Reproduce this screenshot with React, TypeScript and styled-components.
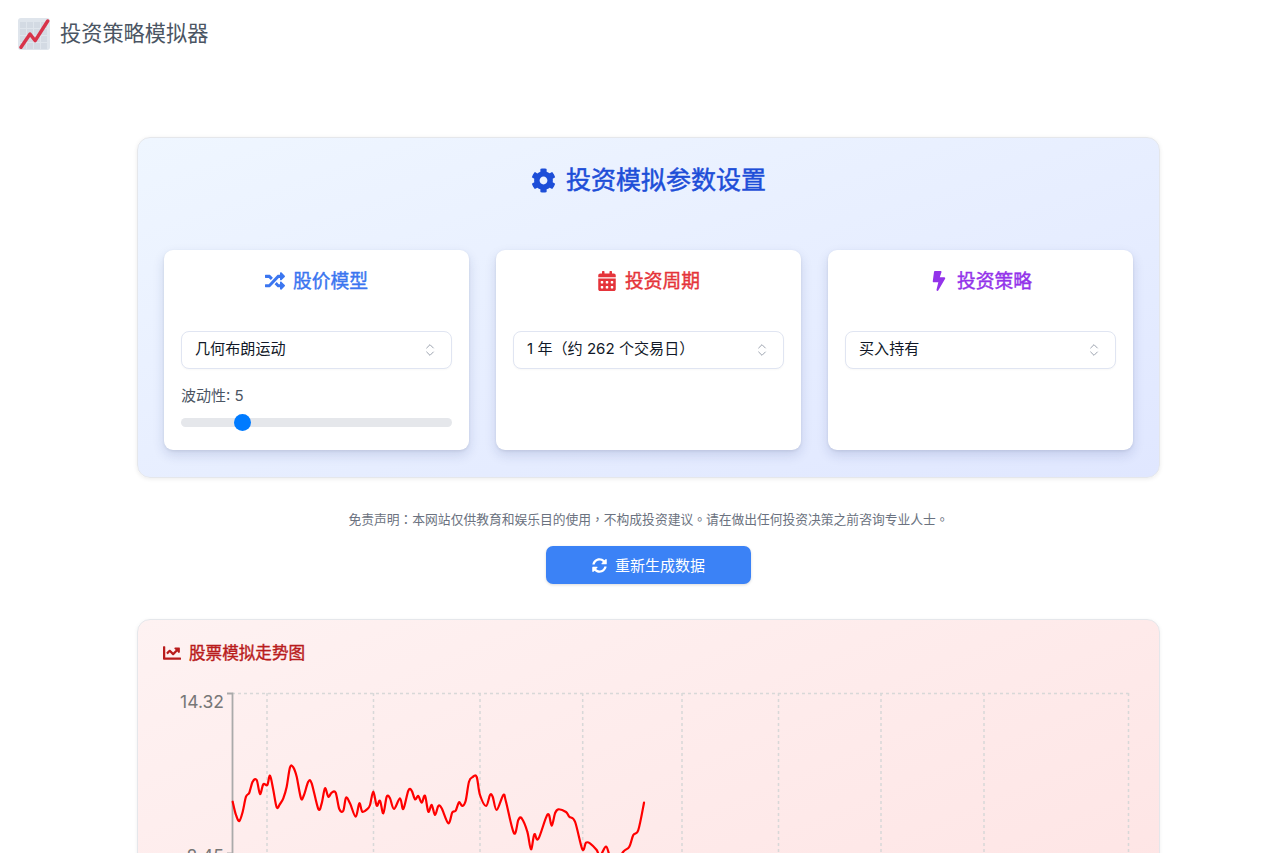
import React from "react";
import styled, { createGlobalStyle } from "styled-components";
import { FaCog, FaRandom, FaCalendarAlt, FaBolt, FaSyncAlt, FaChartLine } from "react-icons/fa";
import { ChevronsUpDown } from "lucide-react";

const Global = createGlobalStyle`
  html, body { margin: 0; height: 853px; overflow: hidden; background: #fff; }
  body { font-family: Inter, "Noto Sans CJK SC", sans-serif; color: #111827; }
  * { box-sizing: border-box; }
`;

const Header = styled.header`
  display: flex;
  align-items: center;
  gap: 10px;
  height: 68px;
  padding: 0 18px;
`;
const BrandName = styled.span`
  padding-bottom: 2px;
  font-size: 21.2px;
  line-height: 32px;
  color: #4b5563;
`;
const Main = styled.main`
  width: 1023px;
  margin: 69px 0 0 137px;
  display: flex;
  flex-direction: column;
  align-items: center;
`;
const SettingsPanel = styled.section`
  width: 100%;
  padding: 26px 26px 27px;
  border: 1px solid #e5e7eb;
  border-radius: 13px;
  background: linear-gradient(to bottom right, #eff6ff, #e0e7ff);
  box-shadow: 0 1px 4px rgba(0, 0, 0, 0.08);
`;
const PanelTitle = styled.h2`
  display: flex;
  justify-content: center;
  align-items: center;
  gap: 10px;
  margin: 0 0 54px;
  height: 32px;
  font-size: 25px;
  font-weight: 400;
  -webkit-text-stroke: 0.5px currentColor;
  color: #1d4ed8;
`;
const TitleText = styled.span<{ $lift: number }>`
  padding-bottom: ${(p) => p.$lift}px;
`;
const CardGrid = styled.div`
  display: grid;
  grid-template-columns: repeat(3, 1fr);
  gap: 27px;
`;
const Card = styled.div`
  display: flex;
  flex-direction: column;
  padding: 17px 17px 23px;
  border-radius: 9px;
  background: #fff;
  box-shadow: 0 5px 12px rgba(30, 50, 120, 0.15), 0 1px 3px rgba(0, 0, 0, 0.08);
`;
const CardTitle = styled.h3<{ $tone: string }>`
  display: flex;
  justify-content: center;
  align-items: center;
  gap: 8px;
  height: 28px;
  margin: 0 0 36px;
  font-size: 18.75px;
  font-weight: 400;
  -webkit-text-stroke: 0.4px currentColor;
  color: ${(p) => p.$tone};
`;
const SelectWrap = styled.div`
  position: relative;
  height: 38px;
  color: #9ca3af;
`;
const NativeSelect = styled.select`
  appearance: none;
  display: block;
  width: 100%;
  height: 100%;
  padding: 0 13px 3px;
  border: 1px solid #e0e5f2;
  border-radius: 8px;
  background: #fff;
  font: 400 15.1px Inter, "Noto Sans CJK SC", sans-serif;
  color: #111827;
  box-shadow: 0 1px 2px rgba(0, 0, 0, 0.03);
`;
const SelectIcon = styled(ChevronsUpDown)`
  position: absolute;
  top: 11px;
  right: 14px;
  pointer-events: none;
`;
const SliderLabel = styled.label`
  margin-top: 17px;
  font-size: 15px;
  line-height: 20px;
  color: #4b5563;
`;
const Slider = styled.input`
  appearance: none;
  display: block;
  width: 100%;
  height: 9px;
  margin: 12px 0 0;
  border-radius: 5px;
  background: #e5e7eb;
  &::-webkit-slider-thumb {
    appearance: none;
    width: 17px;
    height: 17px;
    border-radius: 50%;
    background: #007bff;
  }
`;
const Disclaimer = styled.p`
  margin: 32px 0 0;
  font-family: Inter, "Noto Sans CJK TC", sans-serif;
  font-size: 12.77px;
  line-height: 20px;
  color: #6b7280;
  white-space: nowrap;
`;
const Regenerate = styled.button`
  display: flex;
  align-items: center;
  justify-content: center;
  gap: 8px;
  width: 205px;
  height: 38px;
  margin-top: 16px;
  border: 0;
  border-radius: 7px;
  background: #3b82f6;
  color: #fff;
  font: 400 15px Inter, "Noto Sans CJK SC", sans-serif;
  box-shadow: 0 1px 3px rgba(0, 0, 0, 0.15);
`;
const ChartPanel = styled.section`
  width: 100%;
  height: 420px;
  margin-top: 35px;
  padding: 19px 25px;
  border: 1px solid #e5e7eb;
  border-radius: 13px;
  background: linear-gradient(to bottom right, #fef2f2, #fee2e2);
  box-shadow: 0 1px 4px rgba(0, 0, 0, 0.06);
`;
const ChartTitle = styled.h3`
  display: flex;
  align-items: center;
  gap: 8px;
  height: 28px;
  margin: 0 0 13px;
  font-size: 16.6px;
  font-weight: 400;
  -webkit-text-stroke: 0.4px currentColor;
  color: #b91c1c;
`;
const ChartSvg = styled.svg`
  display: block;
`;
const AxisLabel = styled.text`
  font: 400 17.5px Inter, sans-serif;
  fill: #777;
  text-anchor: end;
`;

// Line points read from the reference, converted to page coordinates.
const rawA = [[308,575],[318,615],[328,633],[338,605],[348,560],[358,548],[368,515],[380,510],[390,552],[400,523],[412,525],[420,497],[430,540],[440,592],[450,582],[460,565],[470,530],[480,472],[490,472],[500,500],[513,565],[522,555],[535,515],[545,520],[565,597],[575,580],[585,535],[595,560],[605,548],[617,548],[628,597],[640,602],[648,563],[660,580],[677,620],[688,580],[697,605],[712,597],[720,585],[730,545],[740,587],[750,572],[760,610],[770,560],[780,565],[792,597],[810,565],[820,597],[835,542],[845,542],[855,568],[865,558],[875,578],[885,557],[895,605]];
const rawB = [[35,375],[45,405],[55,378],[65,385],[85,430],[97,397],[107,392],[117,367],[127,378],[137,362],[147,305],[158,291],[170,291],[180,345],[198,378],[210,345],[218,350],[230,390],[250,345],[258,365],[282,460],[295,420],[305,415],[322,455],[333,508],[343,463],[355,477],[383,403],[395,437],[405,400],[415,388],[438,396],[448,410],[465,425],[487,508],[498,488],[510,490],[530,510],[540,528],[558,500],[570,528],[590,545],[610,515],[628,500],[640,465],[655,450],[672,368]];
const pts = [
  ...rawA.map(([x, y]) => [130 + x / 3, 610 + y / 3]),
  ...rawB.map(([x, y]) => [420 + x / 3, 680 + y / 3]),
];
// Catmull-Rom smoothing so the line has the reference's rounded look.
const linePath = pts.reduce((d, p, i) => {
  if (i === 0) return `M${p[0].toFixed(1)} ${p[1].toFixed(1)}`;
  const p0 = pts[Math.max(i - 2, 0)];
  const p1 = pts[i - 1];
  const p3 = pts[Math.min(i + 1, pts.length - 1)];
  const c1 = [p1[0] + (p[0] - p0[0]) / 6, p1[1] + (p[1] - p0[1]) / 6];
  const c2 = [p[0] - (p3[0] - p1[0]) / 6, p[1] - (p3[1] - p1[1]) / 6];
  return `${d}C${c1[0].toFixed(1)} ${c1[1].toFixed(1)} ${c2[0].toFixed(1)} ${c2[1].toFixed(1)} ${p[0].toFixed(1)} ${p[1].toFixed(1)}`;
}, "");
const gridX = [267, 373.5, 480, 582.7, 682, 778.5, 881, 984, 1128.5];

const Logo = () => (
  <svg width="32" height="32" viewBox="0 0 32 32" aria-hidden="true">
    <rect width="32" height="32" rx="3" fill="#dfe5ec" />
    {[4, 11, 18, 25].flatMap((y) =>
      [2, 9, 16, 23].map((x) => <rect key={`${x}-${y}`} x={x} y={y} width="6" height="6" fill="#d3dae3" />)
    )}
    <path d="M3 29.3 12 16l5.2 6.7L29.7 3" fill="none" stroke="#d8334a" strokeWidth="3.4" strokeLinecap="round" strokeLinejoin="round" />
  </svg>
);

const SelectBox = ({ options }: { options: string[] }) => (
  <SelectWrap>
    <NativeSelect defaultValue={options[0]}>
      {options.map((o) => (
        <option key={o}>{o}</option>
      ))}
    </NativeSelect>
    <SelectIcon size={16} strokeWidth={1.5} />
  </SelectWrap>
);

export default function App() {
  return (
    <>
      <Global />
      <Header>
        <Logo />
        <BrandName>投资策略模拟器</BrandName>
      </Header>
      <Main>
        <SettingsPanel>
          <PanelTitle>
            <FaCog size={25} />
            <TitleText $lift={4}>投资模拟参数设置</TitleText>
          </PanelTitle>
          <CardGrid>
            <Card>
              <CardTitle $tone="#3b76f0">
                <FaRandom size={20} />
                <TitleText $lift={3}>股价模型</TitleText>
              </CardTitle>
              <SelectBox options={["几何布朗运动"]} />
              <SliderLabel htmlFor="vol">波动性: 5</SliderLabel>
              <Slider id="vol" type="range" min={1} max={20} defaultValue={5} />
            </Card>
            <Card>
              <CardTitle $tone="#e5343a">
                <FaCalendarAlt size={20} />
                <TitleText $lift={3}>投资周期</TitleText>
              </CardTitle>
              <SelectBox options={["1 年（约 262 个交易日）"]} />
            </Card>
            <Card>
              <CardTitle $tone="#9333ea">
                <FaBolt size={20} />
                <TitleText $lift={3}>投资策略</TitleText>
              </CardTitle>
              <SelectBox options={["买入持有"]} />
            </Card>
          </CardGrid>
        </SettingsPanel>
        <Disclaimer>免责声明：本网站仅供教育和娱乐目的使用，不构成投资建议。请在做出任何投资决策之前咨询专业人士。</Disclaimer>
        <Regenerate>
          <FaSyncAlt size={15} />
          <TitleText $lift={2}>重新生成数据</TitleText>
        </Regenerate>
        <ChartPanel>
          <ChartTitle>
            <FaChartLine size={18} />
            <TitleText $lift={2}>股票模拟走势图</TitleText>
          </ChartTitle>
          <ChartSvg width="971" height="300" viewBox="163 680 971 300">
            <line x1="232" y1="693.5" x2="1128.5" y2="693.5" stroke="#d8d8d8" strokeWidth="1.5" strokeDasharray="3 3" />
            {gridX.map((x) => (
              <line key={x} x1={x} y1="693" x2={x} y2="980" stroke="#d8d8d8" strokeWidth="1.5" strokeDasharray="3 3" />
            ))}
            <path d="M227 693.5h5.5V980M227 853.5h5" fill="none" stroke="#aaa" strokeWidth="1.8" />
            <AxisLabel x="224" y="707.5">14.32</AxisLabel>
            <AxisLabel x="224" y="861.5">8.45</AxisLabel>
            <path d={linePath} fill="none" stroke="#ff0000" strokeWidth="2.2" strokeLinejoin="round" strokeLinecap="round" />
          </ChartSvg>
        </ChartPanel>
      </Main>
    </>
  );
}
